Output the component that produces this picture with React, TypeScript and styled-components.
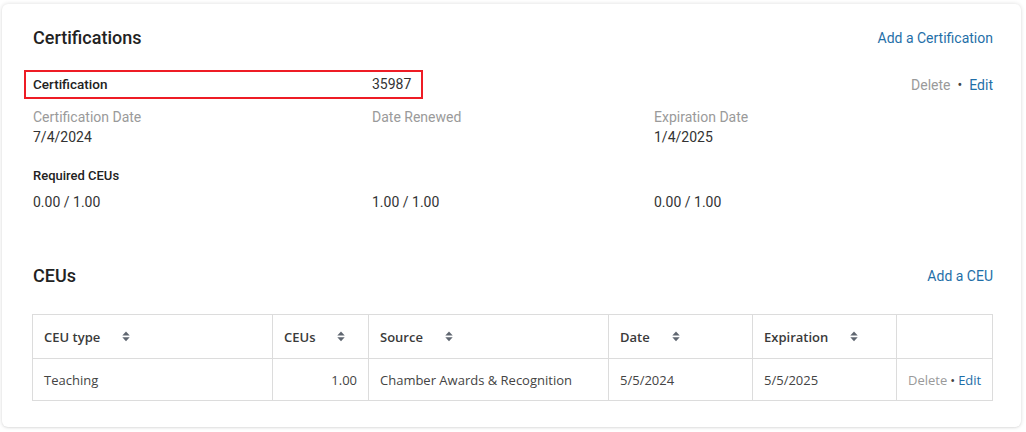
import styled, { createGlobalStyle } from 'styled-components';

const GlobalStyle = createGlobalStyle`
  body {
    margin: 0;
    background: #ffffff;
    font-family: Roboto, "Liberation Sans", Arial, sans-serif;
    color: #333;
  }
  * { box-sizing: border-box; }
`;

const Page = styled.div`
  padding: 4px 5px 6px 2px;
`;

const Card = styled.div`
  background: #fff;
  border-radius: 6px;
  box-shadow: 0 0 4px rgba(0, 0, 0, 0.14), 0 1px 2px rgba(0, 0, 0, 0.06);
  padding: 22px 28px 26px 31px;
`;

const HeadRow = styled.div<{ $top?: number }>`
  display: flex;
  align-items: center;
  justify-content: space-between;
  margin-top: ${p => p.$top ?? 0}px;
`;

const Heading = styled.h2`
  margin: 0;
  font-size: 18px;
  line-height: 24px;
  font-weight: 500;
  color: #222;
`;

const Link = styled.a<{ $size?: number }>`
  color: #1f6fa8;
  font-size: ${p => p.$size ?? 14}px;
  text-decoration: none;
  cursor: pointer;
`;

const Muted = styled.span`
  color: #9a9a9a;
  cursor: pointer;
`;

const Dot = styled.span`
  color: #444;
  margin: 0 7px;
`;

const Actions = styled.div`
  font-size: 14px;
  line-height: 25px;
  padding-top: 2px;
`;

const TitleRow = styled.div`
  display: flex;
  align-items: center;
  justify-content: space-between;
  margin-top: 20px;
`;

const Highlight = styled.div`
  display: grid;
  grid-template-columns: 339px 1fr;
  align-items: center;
  width: 399px;
  height: 29px;
  margin-left: -9px;
  padding: 0 10px 0 7px;
  border: 2px solid #ee1c25;
  line-height: 25px;
`;

const Strong = styled.span`
  font-size: 13.5px;
  font-weight: 500;
  color: #222;
`;

const Plain = styled.span`
  color: #333;
  font-size: 14px;
`;

const Grid = styled.div<{ $top: number }>`
  display: grid;
  grid-template-columns: 339px 282px 1fr;
  margin-top: ${p => p.$top}px;
  font-size: 14px;
  line-height: 20px;
`;

const Label = styled.div`
  color: #9a9a9a;
`;

const Value = styled.div`
  color: #333;
`;

const SubLabel = styled.div`
  margin-top: 19px;
  font-size: 13px;
  line-height: 20px;
  font-weight: 500;
  color: #222;
`;

const Table = styled.table`
  width: calc(100% + 0px);
  margin: 26px 0 0 -1px;
  border-collapse: collapse;
  table-layout: fixed;
  font-family: "Open Sans", "Noto Sans", sans-serif;
  font-size: 13px;
  color: #444;
`;

const Th = styled.th`
  height: 44px;
  padding: 0 11px;
  border: 1px solid #dcdcdc;
  text-align: left;
  font-weight: 600;
  color: #3a3a3a;
`;

const ThInner = styled.span`
  display: inline-flex;
  align-items: center;
  gap: 22px;
`;

const Td = styled.td<{ $align?: string }>`
  height: 42px;
  padding: 0 11px;
  border: 1px solid #dcdcdc;
  text-align: ${p => p.$align ?? 'left'};
`;

const TableActions = styled.span`
  font-size: 13px;
  ${Dot} {
    margin: 0 3px;
  }
`;

const SortIcon = () => (
  <svg width="8" height="11" viewBox="0 0 8 11" aria-hidden="true">
    <path d="M0.3 4.6 L4 0.6 L7.7 4.6 Z" fill="#5f6670" />
    <path d="M0.3 6.2 L7.7 6.2 L4 10.2 Z" fill="#5f6670" />
  </svg>
);

const columns = [
  { key: 'type', title: 'CEU type', width: 240, sortable: true },
  { key: 'ceus', title: 'CEUs', width: 96, sortable: true },
  { key: 'source', title: 'Source', width: 240, sortable: true },
  { key: 'date', title: 'Date', width: 144, sortable: true },
  { key: 'exp', title: 'Expiration', width: 144, sortable: true },
  { key: 'act', title: '', width: 96, sortable: false },
];

const rows = [
  {
    id: 1,
    type: 'Teaching',
    ceus: '1.00',
    source: 'Chamber Awards & Recognition',
    date: '5/5/2024',
    exp: '5/5/2025',
  },
];

const App = () => {
  return (
    <Page>
      <GlobalStyle />
      <Card>
        <HeadRow>
          <Heading>Certifications</Heading>
          <Link>Add a Certification</Link>
        </HeadRow>

        <TitleRow>
          <Highlight>
            <Strong>Certification</Strong>
            <Plain>35987</Plain>
          </Highlight>
          <Actions>
            <Muted>Delete</Muted>
            <Dot>•</Dot>
            <Link>Edit</Link>
          </Actions>
        </TitleRow>

        <Grid $top={8}>
          <Label>Certification Date</Label>
          <Label>Date Renewed</Label>
          <Label>Expiration Date</Label>
          <Value>7/4/2024</Value>
          <Value></Value>
          <Value>1/4/2025</Value>
        </Grid>

        <SubLabel>Required CEUs</SubLabel>
        <Grid $top={6}>
          <Value>0.00 / 1.00</Value>
          <Value>1.00 / 1.00</Value>
          <Value>0.00 / 1.00</Value>
        </Grid>

        <HeadRow $top={52}>
          <Heading>CEUs</Heading>
          <Link>Add a CEU</Link>
        </HeadRow>

        <Table>
          <colgroup>
            {columns.map(c => (
              <col key={c.key} style={{ width: c.width }} />
            ))}
          </colgroup>
          <thead>
            <tr>
              {columns.map(c => (
                <Th key={c.key}>
                  {c.sortable && (
                    <ThInner>
                      {c.title}
                      <SortIcon />
                    </ThInner>
                  )}
                </Th>
              ))}
            </tr>
          </thead>
          <tbody>
            {rows.map(r => (
              <tr key={r.id}>
                <Td>{r.type}</Td>
                <Td $align="right">{r.ceus}</Td>
                <Td>{r.source}</Td>
                <Td>{r.date}</Td>
                <Td>{r.exp}</Td>
                <Td $align="right">
                  <TableActions>
                    <Muted>Delete</Muted>
                    <Dot>•</Dot>
                    <Link as="span" $size={13}>Edit</Link>
                  </TableActions>
                </Td>
              </tr>
            ))}
          </tbody>
        </Table>
      </Card>
    </Page>
  );
};

export default App;
